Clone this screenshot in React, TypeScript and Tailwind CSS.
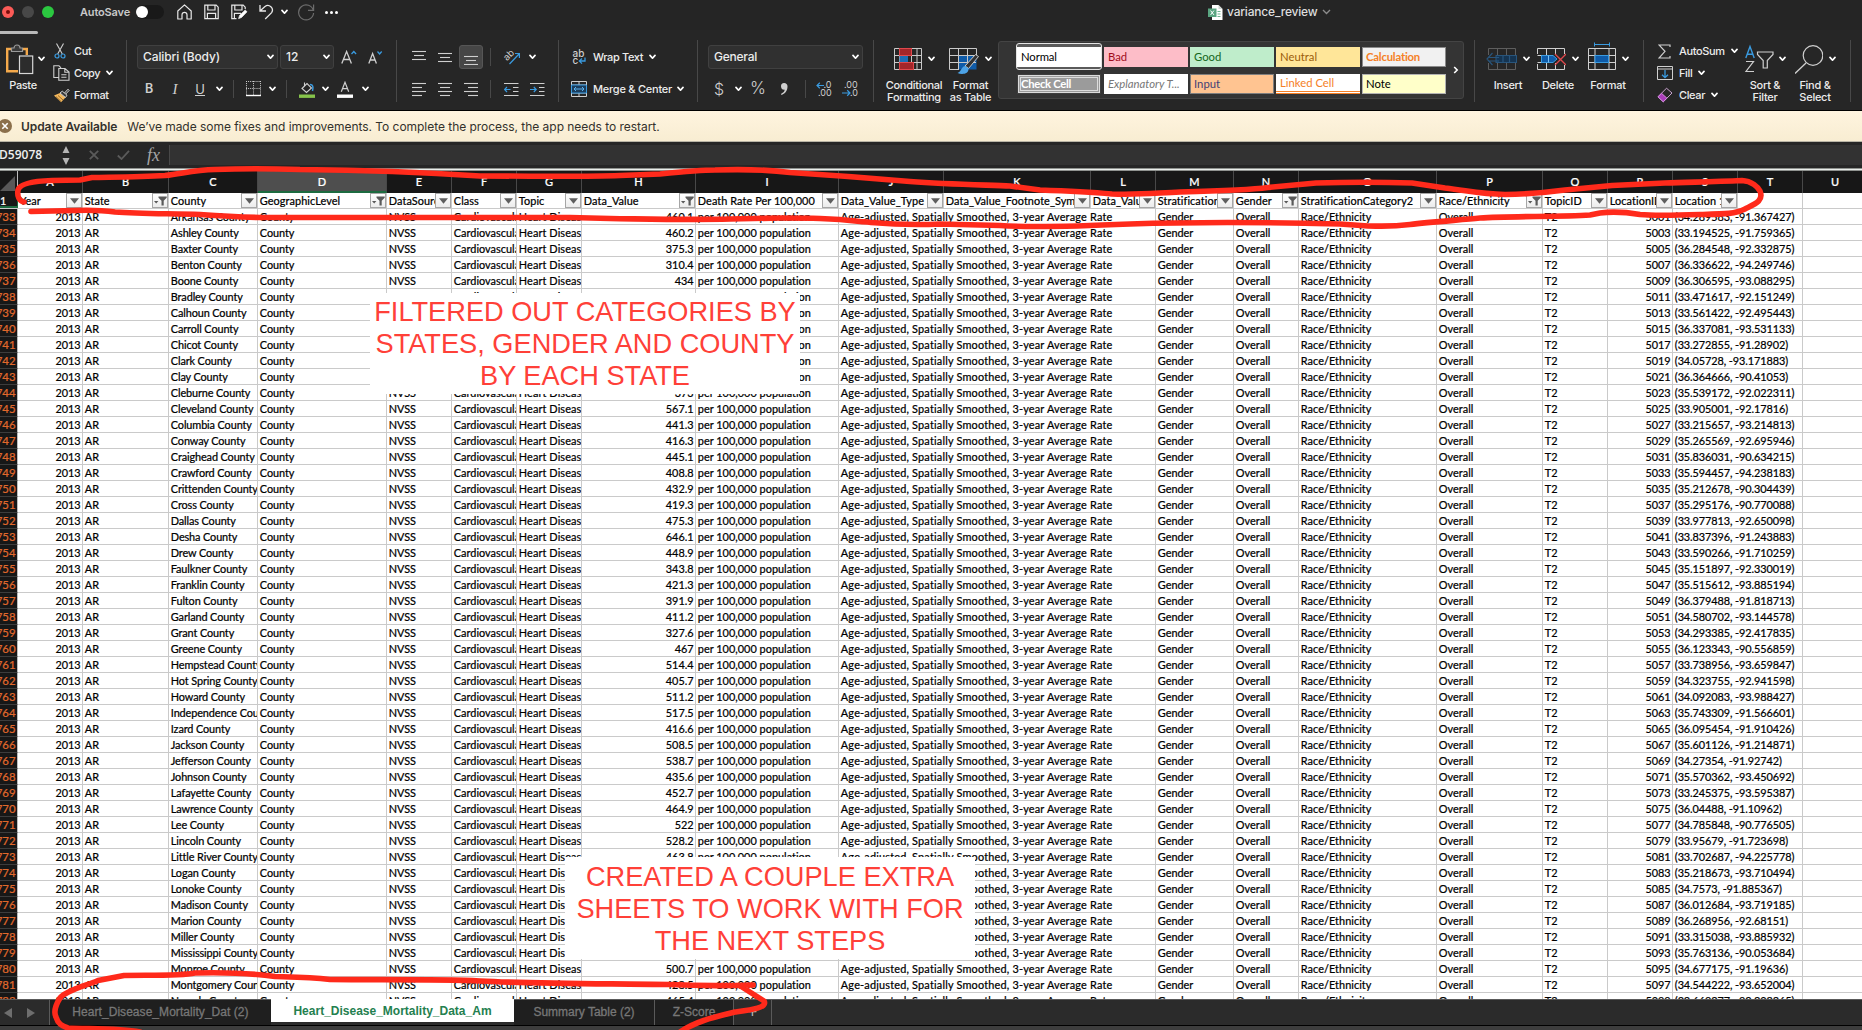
import type { ReactNode } from "react";

const COLS = [
  { id: "A", w: "w-[65px]", head: "Year", filtered: false },
  { id: "B", w: "w-[86px]", head: "State", filtered: true },
  { id: "C", w: "w-[89px]", head: "County", filtered: false },
  { id: "D", w: "w-[129px]", head: "GeographicLevel", filtered: true },
  { id: "E", w: "w-[65px]", head: "DataSource", filtered: false },
  { id: "F", w: "w-[65px]", head: "Class", filtered: false },
  { id: "G", w: "w-[65px]", head: "Topic", filtered: false },
  { id: "H", w: "w-[114px]", head: "Data_Value", filtered: true },
  { id: "I", w: "w-[143px]", head: "Death Rate Per 100,000", filtered: false },
  { id: "J", w: "w-[105px]", head: "Data_Value_Type", filtered: false },
  { id: "K", w: "w-[147px]", head: "Data_Value_Footnote_Symbol", filtered: false },
  { id: "L", w: "w-[65px]", head: "Data_Value_F", filtered: false },
  { id: "M", w: "w-[78px]", head: "StratificationC", filtered: false },
  { id: "N", w: "w-[65px]", head: "Gender", filtered: true },
  { id: "O", w: "w-[138px]", head: "StratificationCategory2", filtered: false },
  { id: "P", w: "w-[106px]", head: "Race/Ethnicity", filtered: true },
  { id: "Q", w: "w-[65px]", head: "TopicID", filtered: false },
  { id: "R", w: "w-[65px]", head: "LocationID", filtered: false },
  { id: "S", w: "w-[65px]", head: "Location 1", filtered: false },
];

const DATA: [string, string, string][] = [
  ["Arkansas", "460.1", "34.289583, -91.367427"],
  ["Ashley", "460.2", "33.194525, -91.759365"],
  ["Baxter", "375.3", "36.284548, -92.332875"],
  ["Benton", "310.4", "36.336622, -94.249746"],
  ["Boone", "434", "36.306595, -93.088295"],
  ["Bradley", "", "33.471617, -92.151249"],
  ["Calhoun", "", "33.561422, -92.495443"],
  ["Carroll", "", "36.337081, -93.531133"],
  ["Chicot", "", "33.272855, -91.28902"],
  ["Clark", "", "34.05728, -93.171883"],
  ["Clay", "", "36.364666, -90.41053"],
  ["Cleburne", "373", "35.539172, -92.022311"],
  ["Cleveland", "567.1", "33.905001, -92.17816"],
  ["Columbia", "441.3", "33.215657, -93.214813"],
  ["Conway", "416.3", "35.265569, -92.695946"],
  ["Craighead", "445.1", "35.836031, -90.634215"],
  ["Crawford", "408.8", "35.594457, -94.238183"],
  ["Crittenden", "432.9", "35.212678, -90.304439"],
  ["Cross", "419.3", "35.295176, -90.770088"],
  ["Dallas", "475.3", "33.977813, -92.650098"],
  ["Desha", "646.1", "33.837396, -91.243883"],
  ["Drew", "448.9", "33.590266, -91.710259"],
  ["Faulkner", "343.8", "35.151897, -92.330019"],
  ["Franklin", "421.3", "35.515612, -93.885194"],
  ["Fulton", "391.9", "36.379488, -91.818713"],
  ["Garland", "411.2", "34.580702, -93.144578"],
  ["Grant", "327.6", "34.293385, -92.417835"],
  ["Greene", "467", "36.123343, -90.556859"],
  ["Hempstead", "514.4", "33.738956, -93.659847"],
  ["Hot Spring", "405.7", "34.323755, -92.941598"],
  ["Howard", "511.2", "34.092083, -93.988427"],
  ["Independence", "517.5", "35.743309, -91.566601"],
  ["Izard", "416.6", "36.095454, -91.910426"],
  ["Jackson", "508.5", "35.601126, -91.214871"],
  ["Jefferson", "538.7", "34.27354, -91.92742"],
  ["Johnson", "435.6", "35.570362, -93.450692"],
  ["Lafayette", "452.7", "33.245375, -93.595387"],
  ["Lawrence", "464.9", "36.04488, -91.10962"],
  ["Lee", "522", "34.785848, -90.776505"],
  ["Lincoln", "528.2", "33.95679, -91.723698"],
  ["Little River", "463.8", "33.702687, -94.225778"],
  ["Logan", "", "35.218673, -93.710494"],
  ["Lonoke", "", "34.7573, -91.885367"],
  ["Madison", "", "36.012684, -93.719185"],
  ["Marion", "", "36.268956, -92.68151"],
  ["Miller", "", "33.315038, -93.885932"],
  ["Mississippi", "", "35.763136, -90.053684"],
  ["Monroe", "500.7", "34.677175, -91.19636"],
  ["Montgomery", "428.5", "34.544222, -93.652004"],
  ["Nevada", "465.4", "33.669277, -93.308265"],
];

const Caret = ({ cls = "text-white" }: { cls?: string }) => (
  <svg width="7" height="6" viewBox="0 0 7 6" className={`shrink-0 ${cls}`}>
    <path d="M1 1.4 3.5 4.2 6 1.4" fill="none" stroke="currentColor" strokeWidth="1.7" strokeLinecap="round" strokeLinejoin="round" />
  </svg>
);

const Slot = ({ w, children, cls = "justify-center" }: { w: string; children?: ReactNode; cls?: string }) => (
  <div className={`flex shrink-0 items-center ${w} ${cls}`}>{children}</div>
);

const Divider = () => <div className="mt-[9px] h-[62px] w-px shrink-0 bg-[#484848]" />;
const Sep = () => <div className="h-[18px] w-px shrink-0 bg-[#484848]" />;

const Big = ({ w, icon, lines }: { w: string; icon: ReactNode; lines: string[] }) => (
  <div className={`flex shrink-0 flex-col items-center pt-2 ${w}`}>
    <div className="flex h-10 items-center gap-[6px]">
      {icon}
      <Caret />
    </div>
    {lines.map((l) => (
      <span key={l} className="whitespace-nowrap text-[11px] font-medium leading-[12px] tracking-[-0.27px] text-[#ececec]">{l}</span>
    ))}
  </div>
);

const ListItem = ({ iconW, icon, label, caret }: { iconW: string; icon: ReactNode; label: string; caret?: boolean }) => (
  <div className="flex h-[22px] items-center">
    <Slot w={iconW}>{icon}</Slot>
    <span className="text-[11px] font-medium tracking-[-0.36px] text-[#ececec]">{label}</span>
    {caret && <span className="ml-[6px] flex"><Caret /></span>}
  </div>
);

const AlignIcon = ({ rows, top }: { rows: [number, number][]; top: number }) => (
  <svg width="15" height="15" viewBox="0 0 15 15">
    {rows.map(([x, x2], i) => (
      <path key={i} d={`M${x} ${top + i * 4}H${x2}`} stroke="#cfcfcf" strokeWidth="1.1" />
    ))}
  </svg>
);

const IndentIcon = ({ out }: { out: boolean }) => (
  <svg width="15" height="15" viewBox="0 0 15 15" fill="none">
    <path d="M0 1.5H14.5M9 5.5H14.5M9 9.5H14.5M0 13.5H14.5" stroke="#cfcfcf" strokeWidth="1.1" />
    <path d={out ? "M6.5 7.5H.8M3 5 .6 7.5 3 10" : "M0 7.5H6M3.8 5 6.2 7.5 3.8 10"} stroke="#3a9be0" strokeWidth="1.2" />
  </svg>
);

function TitleBar() {
  return (
    <div className="relative flex h-[30px] shrink-0 items-start bg-[#252525]">
      <div className="flex h-6 items-center">
        <div className="ml-[2px] flex h-3 w-3 items-center justify-center rounded-full bg-[#fc5b57]">
          <div className="h-1 w-1 rounded-full bg-[#7a0c0a]" />
        </div>
        <div className="ml-2 h-3 w-3 rounded-full bg-[#484848]" />
        <div className="ml-2 h-3 w-3 rounded-full bg-[#2bc840]" />
        <span className="ml-[26px] text-[11px] font-semibold tracking-[-0.16px] text-[#c9c9c9]">AutoSave</span>
        <div className="ml-[6px] flex h-[14px] w-7 items-center rounded-full bg-[#191919]">
          <div className="h-3 w-3 rounded-full bg-white" />
        </div>
        <svg className="ml-[13px]" width="15" height="16" viewBox="0 0 15 16" fill="none" stroke="#e8e8e8" strokeWidth="1.2">
          <path d="M.8 7 7.5.9 14.2 7V15H10V10.8A2.5 2.5 0 0 0 5 10.8V15H.8Z" strokeLinejoin="round" />
        </svg>
        <svg className="ml-[12px]" width="15" height="16" viewBox="0 0 15 16" fill="none" stroke="#e8e8e8" strokeWidth="1.2">
          <path d="M.8 1.2H12.2L14.2 3.2V14.6H.8ZM3.8 1.2V6H11V1.2M3.4 14.6V9.4H11.6V14.6" />
        </svg>
        <svg className="ml-[12px]" width="17" height="16" viewBox="0 0 17 16" fill="none" stroke="#e8e8e8" strokeWidth="1.2">
          <path d="M14.2 5V3.2L12.2 1.2H.8V14.6H5.5M3.8 1.2V6H11V1.2M3.4 14.6V9.4H10" />
          <path d="M7.6 14.6 8.6 11.4 14.2 6 16 7.8 10.6 13.4Z" fill="#fff" strokeWidth=".8" />
        </svg>
        <svg className="ml-[11px]" width="15" height="17" viewBox="0 0 15 17" fill="none" stroke="#e8e8e8" strokeWidth="1.3">
          <path d="M1 1V7H7M1 7 6 2.4A4.6 4.6 0 0 1 12.6 8.6L6.2 15" />
        </svg>
        <span className="ml-[7px] flex"><Caret /></span>
        <svg className="ml-[9px]" width="18" height="18" viewBox="0 0 18 18" fill="none" stroke="#6c6c6c" strokeWidth="1.2">
          <path d="M16.4 7.5A7.5 7.5 0 1 0 16.6 10M16.6 1.5V7.3H11" />
        </svg>
        <div className="ml-[10px] flex gap-[2px]">
          <i className="h-[3px] w-[3px] rounded-full bg-white" />
          <i className="h-[3px] w-[3px] rounded-full bg-white" />
          <i className="h-[3px] w-[3px] rounded-full bg-white" />
        </div>
      </div>
      <div className="absolute left-[1208px] top-0 flex h-6 items-center">
        <svg width="15" height="15" viewBox="0 0 15 15">
          <path d="M4 0H10.5L14.5 4V15H4Z" fill="#fff" />
          <path d="M10.5 0V4H14.5" fill="#cfd6d2" />
          <path d="M9.5 6.5H12.5M9.5 9H12.5M9.5 11.5H12.5" stroke="#6fb591" />
          <rect y="3.5" width="8.5" height="8.5" fill="#5aa581" />
          <path d="M2.6 5.6 5.9 9.9M5.9 5.6 2.6 9.9" stroke="#fff" />
        </svg>
        <span className="ml-1 text-[12px] font-medium tracking-[-0.19px] text-[#dedede]">variance_review</span>
        <svg className="ml-[4px]" width="9" height="6" viewBox="0 0 9 6"><path d="M1 1 4.5 4.4 8 1" fill="none" stroke="#8c8c8c" strokeWidth="1.4" /></svg>
      </div>
    </div>
  );
}

const box = "flex h-6 shrink-0 items-center justify-between rounded-[3px] border border-[#404040] bg-[#303030] pr-[3px] pl-[5px] text-[12px] font-medium text-[#ececec]";

function Ribbon() {
  return (
    <div className="flex h-[80px] shrink-0 bg-[#262626] pt-px">
      <div className="flex w-[126px] shrink-0 flex-col">
        <div className="h-[3px] w-[38px] rounded-r-sm bg-[#b9b9b9]" />
        <div className="flex">
          <div className="w-[48px] pt-[9px] pl-[6px]">
            <div className="flex items-center gap-[4px]">
              <svg width="28" height="32" viewBox="0 0 28 32" fill="none">
                <path d="M5 6H1.2V28.2H12M17 6H20.8V12" stroke="#f4a94b" strokeWidth="2.4" />
                <path d="M5.5 8.5V5H8A3 3 0 0 1 14 5H16.5V8.5Z" fill="#3a3a3a" stroke="#9a9a9a" strokeWidth="1.2" />
                <rect x="13.5" y="13" width="13.2" height="17.5" fill="#2c2c2c" stroke="#d8d8d8" strokeWidth="1.2" />
              </svg>
              <Caret />
            </div>
            <div className="mt-[3px] -ml-[6px] w-[46px] text-center text-[11px] font-medium leading-[14px] tracking-[-0.35px] text-[#ececec]">Paste</div>
          </div>
          <div className="pt-[6px]">
            <ListItem iconW="w-[26px]" label="Cut" icon={
              <svg className="-translate-x-[1px]" width="12" height="16" viewBox="0 0 12 16" fill="none">
                <path d="M2.5.5 8.3 11M9.5.5 3.7 11" stroke="#cfcfcf" strokeWidth="1.1" />
                <circle cx="3" cy="13" r="2" stroke="#3a9be0" strokeWidth="1.2" /><circle cx="9" cy="13" r="2" stroke="#3a9be0" strokeWidth="1.2" />
              </svg>} />
            <ListItem iconW="w-[26px]" label="Copy" caret icon={
              <svg width="17" height="16" viewBox="0 0 17 16" fill="none" stroke="#cfcfcf" strokeWidth="1.1">
                <path d="M5.5 12.5H.8V.8H6L8 2.8M5.8 3.5H12L16 7V15.3H5.8ZM11.8 3.7V7.2H15.8M8.3 9.8H13.5M8.3 12.3H13.5" />
              </svg>} />
            <ListItem iconW="w-[26px]" label="Format" icon={
              <svg width="17" height="15" viewBox="0 0 17 15" fill="none">
                <path d="M1 7.5 7 5 12.5 9.5 8 14.2Z" fill="#f3b75c" />
                <path d="M3 8.6 8 13.5M5 7.5 10 12" stroke="#7b531a" strokeWidth=".8" />
                <path d="M7 5 9.3 3.2 14 7.2 12.5 9.5ZM11.5 5 15 1.2 16.2 2.4 12.8 6" fill="#3a3a3a" stroke="#cfcfcf" strokeWidth="1" />
              </svg>} />
          </div>
        </div>
      </div>
      <Divider />
      <div className="w-[269px] shrink-0 pl-[10px]">
        <div className="flex h-[52px] items-center">
          <div className={`${box} w-[141px] tracking-[-0.1px]`}>Calibri (Body)<Caret /></div>
          <div className={`${box} ml-[2px] w-[54px]`}>12<Caret /></div>
          <svg className="ml-[7px]" width="16" height="14" viewBox="0 0 16 14" fill="none">
            <path d="M.8 13.5 5.6 1.5 10.4 13.5M2.5 9.5H8.7" stroke="#cfcfcf" strokeWidth="1.3" /><path d="M10.5 4 12.8 1.5 15.1 4" stroke="#3a9be0" strokeWidth="1.3" />
          </svg>
          <svg className="ml-[11px]" width="15" height="14" viewBox="0 0 15 14" fill="none">
            <path d="M.8 13.5 4.6 3.5 8.4 13.5M2.2 10H7" stroke="#cfcfcf" strokeWidth="1.3" /><path d="M9.5 1.5 11.6 4 13.7 1.5" stroke="#3a9be0" strokeWidth="1.3" />
          </svg>
        </div>
        <div className="flex h-3 items-center text-[13px] text-[#cfcfcf]">
          <Slot w="w-[24px]"><b className="text-[12.5px] font-semibold">B</b></Slot>
          <Slot w="w-[28px]"><i className="font-['Liberation_Serif'] text-[15px]">I</i></Slot>
          <Slot w="w-[22px]"><span className="border-b border-[#cfcfcf] leading-[12px]">U</span></Slot>
          <Slot w="w-[16px]"><Caret /></Slot>
          <Slot w="w-[12px]"><Sep /></Slot>
          <Slot w="w-[28px]">
            <svg width="15" height="16" viewBox="0 0 15 16" fill="none" stroke="#cfcfcf">
              <path d="M0 .5H15M.5 0V14M14.5 0V14M7.5 0V14M0 7.5H15" strokeDasharray="1 1.1" /><path d="M0 14.5H15" stroke="#fff" strokeWidth="1.4" />
            </svg>
          </Slot>
          <Slot w="w-[10px]"><Caret /></Slot>
          <Slot w="w-[18px]"><Sep /></Slot>
          <Slot w="w-[24px]">
            <svg width="16" height="17" viewBox="0 0 16 17" fill="none">
              <path d="M3 7.5 8 2.5 12.5 7 7.5 11.5ZM5.5 5V1.5" stroke="#cfcfcf" strokeWidth="1.1" /><path d="M11 3.5C14 3.5 14.5 6 13.5 10" stroke="#3a9be0" strokeWidth="1.5" /><rect y="13.5" width="16" height="3.4" fill="#86c34b" />
            </svg>
          </Slot>
          <Slot w="w-[12px]"><Caret /></Slot>
          <Slot w="w-[28px]">
            <svg width="16" height="17" viewBox="0 0 16 17" fill="none">
              <path d="M4.3 10.8 8 1.3 11.7 10.8M5.6 7.6H10.4" stroke="#cfcfcf" strokeWidth="1.2" /><rect y="13.5" width="16" height="3.4" fill="#fff" />
            </svg>
          </Slot>
          <Slot w="w-[12px]"><Caret /></Slot>
        </div>
      </div>
      <Divider />
      <div className="w-[161px] shrink-0 pl-[9px]">
        <div className="flex h-[52px] items-center">
          <Slot w="w-[26px]"><AlignIcon top={1.5} rows={[[0, 14], [2, 12], [0, 14]]} /></Slot>
          <Slot w="w-[26px]"><AlignIcon top={3.5} rows={[[0, 14], [2, 12], [0, 14]]} /></Slot>
          <Slot w="w-[26px]"><div className="flex h-6 w-6 items-center justify-center rounded-[3px] border border-[#565656] bg-[#464646]"><AlignIcon top={6.5} rows={[[0, 14], [2, 12], [0, 14]]} /></div></Slot>
          <Slot w="w-[13px]"><Sep /></Slot>
          <Slot w="w-[29px]">
            <svg className="overflow-visible" width="16" height="16" viewBox="0 0 16 16" fill="none">
              <text x="-1" y="9" transform="rotate(-45 5 6)" fill="#cfcfcf" fontSize="9.5" fontFamily="Inter">ab</text>
              <path d="M5.5 15 15 5M11 4.5H15.4V9" stroke="#3a9be0" strokeWidth="1.2" />
            </svg>
          </Slot>
          <Slot w="w-[12px]"><Caret /></Slot>
        </div>
        <div className="flex h-3 items-center">
          <Slot w="w-[26px]"><AlignIcon top={1.5} rows={[[0, 14], [0, 10], [0, 14], [0, 10]]} /></Slot>
          <Slot w="w-[26px]"><AlignIcon top={1.5} rows={[[0, 14], [2, 12], [0, 14], [2, 12]]} /></Slot>
          <Slot w="w-[26px]"><AlignIcon top={1.5} rows={[[0, 14], [4, 14], [0, 14], [4, 14]]} /></Slot>
          <Slot w="w-[13px]"><Sep /></Slot>
          <Slot w="w-[28px]"><IndentIcon out /></Slot>
          <Slot w="w-[24px]"><IndentIcon out={false} /></Slot>
        </div>
      </div>
      <Divider />
      <div className="w-[138px] shrink-0 pl-[12px] text-[11px] font-medium text-[#ececec]">
        <div className="flex h-[52px] items-center">
          <svg className="overflow-visible" width="16" height="16" viewBox="0 0 16 16" fill="none">
            <text x="1.5" y="7.5" fill="#cfcfcf" fontSize="10" fontFamily="Inter">ab</text>
            <text x="1.5" y="15.2" fill="#cfcfcf" fontSize="10" fontFamily="Inter">c</text>
            <path d="M14 8.5V12H8.5M11 9.5 8.3 12 11 14.6" stroke="#3a9be0" strokeWidth="1.3" />
          </svg>
          <span className="ml-[6px] whitespace-nowrap tracking-[-0.38px]">Wrap Text</span>
          <span className="ml-[6px] flex"><Caret /></span>
        </div>
        <div className="flex h-3 items-center">
          <svg width="16" height="16" viewBox="0 0 16 16" fill="none">
            <path d="M.5 .5H15.5V15.5H.5ZM.5 4H15.5M.5 12H15.5M8 .5V4M8 12V15.5" stroke="#cfcfcf" />
            <rect x="1" y="4" width="14" height="8" fill="#1b3d5c" /><path d="M.5 4H15.5V12H.5Z" stroke="#3a9be0" />
            <path d="M3 8H13M5 6 3 8 5 10M11 6 13 8 11 10" stroke="#5cb2ee" />
          </svg>
          <span className="ml-[6px] whitespace-nowrap tracking-[-0.24px]">Merge &amp; Center</span>
          <span className="ml-[5px] flex"><Caret /></span>
        </div>
      </div>
      <Divider />
      <div className="w-[175px] shrink-0 pl-[10px]">
        <div className="flex h-[52px] items-center">
          <div className={`${box} w-[155px] tracking-[-0.24px]`}>General<Caret /></div>
        </div>
        <div className="flex h-3 items-center text-[#cfcfcf]">
          <Slot w="w-[22px]"><span className="text-[16px] font-light">$</span></Slot>
          <Slot w="w-[16px]"><Caret /></Slot>
          <Slot w="w-[24px]"><span className="text-[17px] font-light">%</span></Slot>
          <Slot w="w-[28px]">
            <svg width="8" height="12" viewBox="0 0 8 12"><path d="M4 0A3.4 3.4 0 0 1 7.5 3.6C7.5 8 5 11 1.2 12V10.7C3.5 9.8 4.6 8.4 4.7 6.6A3.3 3.3 0 1 1 4 0Z" fill="#cfcfcf" /></svg>
          </Slot>
          <Slot w="w-[14px]"><Sep /></Slot>
          <Slot w="w-[24px]">
            <svg className="overflow-visible" width="16" height="16" viewBox="0 0 16 16" fill="none">
              <text x="7.5" y="7.3" fill="#cfcfcf" fontSize="9" fontFamily="Inter">.0</text><text x="2" y="15.3" fill="#cfcfcf" fontSize="9" fontFamily="Inter">.00</text>
              <path d="M8 4.5H1M3.8 1.8 1 4.5 3.8 7.2" stroke="#3a9be0" strokeWidth="1.2" />
            </svg>
          </Slot>
          <Slot w="w-[28px]">
            <svg className="overflow-visible" width="16" height="16" viewBox="0 0 16 16" fill="none">
              <text x="2" y="7.3" fill="#cfcfcf" fontSize="9" fontFamily="Inter">.00</text><text x="8" y="15.3" fill="#cfcfcf" fontSize="9" fontFamily="Inter">.0</text>
              <path d="M0 12H8M5.2 9.3 8 12 5.2 14.7" stroke="#3a9be0" strokeWidth="1.2" />
            </svg>
          </Slot>
        </div>
      </div>
      <Divider />
      <div className="flex w-[600px] shrink-0 pl-[11px]">
        <Big w="w-[58px]" lines={["Conditional", "Formatting"]} icon={
          <svg width="28" height="22" viewBox="0 0 28 22">
            <path d="M.5 .5H27.5V21.5H.5ZM.5 7.5H27.5M.5 14.5H27.5M5.5 .5V21.5M17.5 .5V21.5M23 .5V21.5" fill="none" stroke="#c9c9c9" />
            <rect x="5.5" y=".5" width="12" height="7" fill="#a3262a" stroke="#e0484c" /><rect x="5.5" y="8" width="8.5" height="6.5" fill="#1c6db5" /><rect x="5.5" y="14.5" width="14" height="7" fill="#a3262a" stroke="#e0484c" />
          </svg>} />
        <Big w="w-[55px]" lines={["Format", "as Table"]} icon={
          <svg className="overflow-visible" width="30" height="22" viewBox="0 0 30 22">
            <rect x="9.5" y="7.5" width="18" height="14" fill="#0f5ba8" />
            <path d="M27.5 7V.5H.5V21.5H10M.5 7.5H27.5M.5 14.5H27M9.5 .5V21.5M18.5 .5V21.5" fill="none" stroke="#c9c9c9" />
            <path d="M16 18 26.5 6.5 29.5 8.5 19.5 20.5Z" fill="#333" stroke="#c9c9c9" /><path d="M16.5 18C12 18.5 13 23 8.5 25 13 27 20 26 19.5 20.5Z" fill="#4da3e6" />
          </svg>} />
        <div className="mt-[10px] flex h-[58px] w-[466px] items-center rounded-[3px] border border-[#444] bg-[#343434] pl-[17px] font-['Lato'] text-[11.3px] leading-none">
          <div className="flex flex-col gap-[1px]">
            <div className="flex h-[26px] items-center gap-[2px]">
              <div className="flex h-[27px] w-[86px] items-end rounded-[3px] border border-[#e4e4e4] bg-[#5a5a5a] pb-[2px]"><div className="flex h-[20px] w-full items-center bg-white pl-1 tracking-[-0.1px] text-black">Normal</div></div>
              <div className="flex h-5 w-[84px] items-center bg-[#fdbdc8] pl-1 text-[#a00d1c]">Bad</div>
              <div className="flex h-5 w-[84px] items-center bg-[#bfedcb] pl-1 text-[#14661c]">Good</div>
              <div className="flex h-5 w-[84px] items-center bg-[#ffe699] pl-1 text-[#9c5d0a]">Neutral</div>
              <div className="flex h-5 w-[84px] items-center border border-[#8a8a8a] bg-[#f1f1f1] pl-[3px] font-bold tracking-[-0.2px] text-[#f58026]">Calculation</div>
            </div>
            <div className="flex h-[26px] items-center gap-[2px]">
              <div className="flex w-[86px] justify-center"><div className="flex h-[18px] w-[82px] items-center border-[3px] border-double border-[#dcdcdc] bg-[#9b9b9b] font-bold tracking-[-0.3px] text-white outline outline-[#3f3f3f]">Check Cell</div></div>
              <div className="flex h-5 w-[84px] items-center bg-white pl-1 italic text-[#777]">Explanatory T...</div>
              <div className="flex h-5 w-[84px] items-center border border-[#7f7f7f] bg-[#ffc491] pl-[3px] text-[#3f3f76]">Input</div>
              <div className="flex h-5 w-[84px] items-center border-b-[3px] border-double border-[#f58026] bg-white pt-[2px] pl-1 text-[#f58026]">Linked Cell</div>
              <div className="flex h-5 w-[84px] items-center border border-[#b2b2b2] bg-[#ffffc9] pl-[3px] text-black">Note</div>
            </div>
          </div>
          <svg className="ml-[7px]" width="6" height="8" viewBox="0 0 6 8"><path d="M1.2 1 4.2 4 1.2 7" fill="none" stroke="#fff" strokeWidth="1.6" /></svg>
        </div>
      </div>
      <Divider />
      <div className="flex w-[168px] shrink-0 pl-[8px]">
        <Big w="w-[50px]" lines={["Insert"]} icon={
          <svg width="31" height="22" viewBox="0 0 31 22" fill="none">
            <path d="M2.5 7V.5H29.5V21.5H2.5V15M11.5 .5V7M20.5 .5V7M11.5 15V21.5M20.5 15V21.5" stroke="#5e5e5e" /><rect x="10" y="7.5" width="20.5" height="7" fill="#153451" stroke="#28557c" />
            <path d="M13 9.5H2M6.5 5 1 11 6.5 17M13 13H2M17 7V15M23.5 7V15" stroke="#28557c" strokeWidth="1.2" />
          </svg>} />
        <Big w="w-[50px]" lines={["Delete"]} icon={
          <svg width="29" height="22" viewBox="0 0 29 22" fill="none">
            <path d="M.5 6V.5H27.5V6M.5 16V21.5H27.5V17M9.5 .5V7M18.5 .5V7M9.5 15V21.5M18.5 15V21.5M.5 7.5H16M.5 14.5H16" stroke="#cfcfcf" /><path d="M4.5 7.5H16L20 11 16 14.5H4.5Z" fill="#0f5ba8" stroke="#3a9be0" /><path d="M11.5 7.5V14.5" stroke="#7cc0f2" />
            <path d="M18 6 29 17M29 6 18 17" stroke="#e0484c" strokeWidth="1.3" />
          </svg>} />
        <Big w="w-[50px]" lines={["Format"]} icon={
          <svg className="overflow-visible" width="28" height="22" viewBox="0 0 28 22" fill="none">
            <path d="M.5 .5H27.5V21.5H.5ZM.5 7.5H27.5M.5 14.5H27.5M7 .5V21.5M21 .5V21.5" stroke="#cfcfcf" /><rect x="7" y="7.5" width="13.5" height="7" fill="#0f5ba8" stroke="#3a9be0" />
            <path d="M6.5 -3.5H21.5M6.5 -5.5V-1.5M21.5 -5.5V-1.5" stroke="#3a9be0" />
          </svg>} />
      </div>
      <Divider />
      <div className="flex w-[206px] shrink-0">
        <div className="w-[96px] pt-[9px]">
          <ListItem iconW="w-[35px]" label="AutoSum" caret icon={
            <svg className="translate-x-[3px]" width="13" height="15" viewBox="0 0 13 15"><path d="M12 3V1H1L7 7.3 1 14H12V12" fill="none" stroke="#cfcfcf" strokeWidth="1.2" /></svg>} />
          <ListItem iconW="w-[35px]" label="Fill" caret icon={
            <svg className="translate-x-[3px]" width="16" height="14" viewBox="0 0 16 14" fill="none"><path d="M.5 .5H15.5V13.5H.5ZM.5 3H15.5" stroke="#cfcfcf" /><path d="M8 4V11.5M5 8.7 8 11.6 11 8.7" stroke="#3a9be0" strokeWidth="1.3" /></svg>} />
          <ListItem iconW="w-[35px]" label="Clear" caret icon={
            <svg className="translate-x-[3px]" width="16" height="16" viewBox="0 0 16 16" fill="none"><path d="M1 9.8 9.5 1.2 15 6 6.3 14.8Z" stroke="#c9a3cf" /><path d="M1 9.8 4.5 6.3 9.9 11.2 6.3 14.8Z" fill="#a93cba" stroke="#d58be0" /></svg>} />
        </div>
        <Big w="w-[50px]" lines={["Sort &", "Filter"]} icon={
          <svg className="overflow-visible" width="28" height="28" viewBox="0 0 28 28" fill="none">
            <path d="M.8 13 5 1.5 9.2 13M2.2 9.3H7.8" stroke="#3a9be0" strokeWidth="1.4" /><path d="M1 16.5H8.5L1 26.5H9" stroke="#cfcfcf" strokeWidth="1.2" />
            <path d="M12.5 7H28V9.5L22.3 15.5V23H18.2V15.5L12.5 9.5Z" stroke="#cfcfcf" strokeWidth="1.2" />
          </svg>} />
        <Big w="w-[50px]" lines={["Find &", "Select"]} icon={
          <svg width="28" height="29" viewBox="0 0 28 29" fill="none"><circle cx="18" cy="10.5" r="9.8" stroke="#cfcfcf" strokeWidth="1.2" /><path d="M11 18 0 28.5" stroke="#cfcfcf" strokeWidth="1.3" /></svg>} />
      </div>
      <Divider />
    </div>
  );
}

const FilterButton = ({ filtered }: { filtered: boolean }) => (
  <div className="absolute right-0 top-0 flex h-[15px] w-[16px] items-center justify-center border border-[#a6a6a6] bg-linear-to-b from-white to-[#ececec]">
    {filtered ? (
      <svg className="shrink-0" width="13" height="10" viewBox="0 0 13 10" fill="#5a5a5a"><path d="M0 5H4.4L2.2 7.5ZM4.5 .5H12.7V1.7L9.7 4.7V9.5H7.5V4.7L4.5 1.7Z" /></svg>
    ) : (
      <svg width="9" height="6" viewBox="0 0 9 6"><path d="M0 .3H9L4.5 5.8Z" fill="#5e5e5e" /></svg>
    )}
  </div>
);

const line = "h-full shrink-0 overflow-hidden whitespace-nowrap border-r border-[#cacaca] pl-[1.8px]";

function Sheet() {
  return (
    <div className="h-[828px] shrink-0 overflow-hidden bg-white font-['Lato'] text-[10.9px] leading-[16px] text-black [-webkit-text-stroke:0.22px]">
      <div className="flex h-[22px] bg-[#171717] text-[11px] font-medium leading-[22px] text-white">
        <div className="flex w-[18px] shrink-0 items-end justify-end border-r border-[#bdbdbd] pr-[2px] pb-[2px]">
          <svg width="15" height="15" viewBox="0 0 15 15"><path d="M15 0V15H0Z" fill="#585858" /></svg>
        </div>
        {[...COLS, { id: "T", w: "w-[65px]" }, { id: "U", w: "w-[65px]" }].map((c) => (
          <div key={c.id} className={`shrink-0 border-r border-[#484848] text-center ${c.w} ${c.id === "D" ? "border-b-2 border-b-[#1d6b40] bg-[#4e4e4e]" : ""}`}>{c.id}</div>
        ))}
      </div>
      <div className="flex h-4 border-b border-[#cacaca]">
        <div className="w-[18px] shrink-0 border-r border-b-2 border-r-[#1d6b40] border-b-[#1d6b40] bg-[#171717] leading-[15px] text-white">1</div>
        {COLS.map((c) => (
          <div key={c.id} className={`relative ${line} ${c.w}`}>
            <span className="tracking-[0.07px]">{c.head}</span>
            <FilterButton filtered={c.filtered} />
          </div>
        ))}
        <div className={`w-[65px] ${line}`} />
      </div>
      {DATA.map(([county, value, loc], i) => (
        <div key={county} className="flex h-4 shrink-0 border-b border-[#cacaca]">
          <div className="flex h-4 w-[18px] shrink-0 justify-end overflow-hidden border-r border-b border-r-[#bdbdbd] border-b-[#3c3c3c] bg-[#171717] pr-[1.5px] text-[11.4px] text-[#e0692c]">{733 + i}</div>
          <div className={`w-[65px] pr-[1.5px] text-right tracking-[-0.05px] ${line}`}>2013</div>
          <div className={`w-[86px] ${line}`}>AR</div>
          <div className={`w-[89px] tracking-[-0.12px] ${line}`}>{county} County</div>
          <div className={`w-[129px] tracking-[-0.06px] ${line}`}>County</div>
          <div className={`w-[65px] tracking-[-0.05px] ${line}`}>NVSS</div>
          <div className={`w-[65px] tracking-[0.02px] ${line}`}>Cardiovascular Diseases</div>
          <div className={`w-[65px] tracking-[0.1px] ${line}`}>Heart Diseas</div>
          <div className={`w-[114px] pr-[1.5px] text-right tracking-[-0.03px] ${line}`}>{value}</div>
          <div className={`w-[143px] tracking-[0.02px] ${line}`}>per 100,000 population</div>
          <div className={`w-[317px] tracking-[0.19px] ${line}`}>Age-adjusted, Spatially Smoothed, 3-year Average Rate</div>
          <div className={`w-[78px] ${line}`}>Gender</div>
          <div className={`w-[65px] tracking-[0.05px] ${line}`}>Overall</div>
          <div className={`w-[138px] tracking-[0.05px] ${line}`}>Race/Ethnicity</div>
          <div className={`w-[106px] tracking-[0.05px] ${line}`}>Overall</div>
          <div className={`w-[65px] ${line}`}>T2</div>
          <div className={`w-[65px] pr-[1.5px] text-right tracking-[-0.05px] ${line}`}>{5001 + i * 2}</div>
          <div className={`w-[130px] tracking-[-0.08px] ${line}`}>({loc})</div>
        </div>
      ))}
    </div>
  );
}

function SheetTabs() {
  const idle = "flex h-full shrink-0 items-center justify-center border-r border-[#5a5a5a] bg-[#1f1f1f] pb-[2px] text-[#777] [-webkit-text-stroke:0.3px]";
  return (
    <div className="flex h-[26px] shrink-0 border-t border-[#5a5a5a] bg-[#2b2b2b] font-['Liberation_Sans'] text-[12px]">
      <div className="flex w-[49px] shrink-0 items-center">
        <svg className="ml-[4px]" width="8" height="10" viewBox="0 0 8 10"><path d="M8 0V10L0 5Z" fill="#6e6e6e" /></svg>
        <svg className="ml-[15px]" width="8" height="10" viewBox="0 0 8 10"><path d="M0 0V10L8 5Z" fill="#6e6e6e" /></svg>
      </div>
      <div className="flex w-[222px] shrink-0 border-l border-[#5a5a5a]">
        <div className="flex flex-1 items-center justify-center bg-[#1f1f1f] pb-[2px] tracking-[0.05px] text-[#777] [-webkit-text-stroke:0.3px]">Heart_Disease_Mortality_Dat (2)</div>
      </div>
      <div className="-mt-px flex h-[23px] w-[243px] shrink-0 items-center justify-center bg-white pt-[1px] font-bold text-[#24804f]">Heart_Disease_Mortality_Data_Am</div>
      <div className={`w-[141px] ${idle}`}>Summary Table (2)</div>
      <div className={`w-[79px] ${idle}`}>Z-Score</div>
      <div className="flex w-[38px] shrink-0 items-center justify-center border-r border-[#5a5a5a] pb-[2px] text-[16px] text-[#bdbdbd]">+</div>
    </div>
  );
}

const note = "absolute flex flex-col items-center whitespace-nowrap bg-white font-['Liberation_Sans'] text-[27.2px] leading-[32px] text-[#ff4038]";

export default function App() {
  return (
    <div className="relative flex h-[1030px] w-[1862px] flex-col overflow-hidden bg-[#262626] font-['Inter']">
      <TitleBar />
      <Ribbon />
      <div className="flex h-[32px] shrink-0 items-center border-t border-b border-t-black border-b-[#b9b5a6] bg-linear-to-b from-[#fff4df] to-[#f8edd2] pt-[2px] text-[12px] text-[#33312c]">
        <svg className="-mt-[2px] -ml-[2px]" width="14" height="14" viewBox="0 0 14 14"><circle cx="7" cy="7" r="7" fill="#8b6f4b" /><path d="M4.3 4.3 9.7 9.7M9.7 4.3 4.3 9.7" stroke="#fff" strokeWidth="1.6" /></svg>
        <span className="ml-[9px] font-semibold tracking-[-0.08px]">Update Available</span>
        <span className="ml-[10px] tracking-[-0.037px]">We’ve made some fixes and improvements. To complete the process, the app needs to restart.</span>
      </div>
      <div className="flex h-[26px] shrink-0 items-center bg-[#262626]">
        <span className="-ml-[1px] w-[63px] font-['Open_Sans'] text-[12px] font-semibold text-[#efefef]">D59078</span>
        <svg width="8" height="19" viewBox="0 0 8 19" fill="#b5b5b5"><path d="M4 0 7.5 7H.5ZM4 19 7.5 12H.5Z" /></svg>
        <svg className="ml-[19px]" width="10" height="10" viewBox="0 0 10 10"><path d="M.8 .8 9.2 9.2M9.2 .8 .8 9.2" stroke="#5a5a5a" strokeWidth="1.8" /></svg>
        <svg className="ml-[18px]" width="13" height="10" viewBox="0 0 13 10"><path d="M.8 5.5 4.5 9 12 .8" fill="none" stroke="#5a5a5a" strokeWidth="1.8" /></svg>
        <i className="ml-[17px] w-[22px] font-['Liberation_Serif'] text-[18px] leading-none text-[#a5a5a5]">fx</i>
        <div className="h-[20px] flex-1 border-l border-[#484848] bg-[#323232]" />
      </div>
      <div className="h-[3px] shrink-0 border-t border-b border-[#8f928f] bg-[#e9edea]" />
      <Sheet />
      <SheetTabs />
      <div className="flex-1 border-t border-black bg-[#3d3d3d]" />

      <div className={`${note} left-[370px] top-[293px] h-[101px] w-[430px] pt-[3px]`}>
        <span>FILTERED OUT CATEGORIES BY</span>
        <span>STATES, GENDER AND COUNTY</span>
        <span>BY EACH STATE</span>
      </div>
      <div className={`${note} left-[565px] top-[857px] h-[102px] w-[410px] pt-[4px]`}>
        <span>CREATED A COUPLE EXTRA</span>
        <span>SHEETS TO WORK WITH FOR</span>
        <span>THE NEXT STEPS</span>
      </div>

      <svg className="absolute left-0 top-0" width="1862" height="1030" viewBox="0 0 1862 1030" fill="none" stroke="#ff2a1b" strokeWidth="5.6" strokeLinecap="round" strokeLinejoin="round">
        <path d="M24 202C19 201 17 196 18 190C20 183 35 181 52 180.5L80 180L92 177.5C120 177 140 177 165 175.5C185 173 195 170 215 169.5C240 168.5 270 168.5 300 169.5C360 170 420 172 480 176C540 176 580 177 620 175.5L660 174C690 171 700 170 715 170C745 169 770 170 790 172.5C830 175 870 178 910 181.5C950 184.5 990 185 1010 186L1040 190C1070 191 1090 192 1112 194C1140 195 1155 193 1180 192C1220 191 1250 190 1268 187.5L1316 183C1350 182 1380 182 1412 183L1445 188C1470 191 1480 194 1505 194.5C1535 194 1550 192 1565 190L1612 185.5L1665 183C1690 182 1710 182 1742 180.5C1752 181 1758 187 1760 191C1764 201 1755 204 1745 209C1735 214 1725 214 1700 214.5C1670 215.5 1650 215.5 1640 214.5C1625 212 1615 211 1600 213L1590 215C1560 217 1510 216 1480 218C1460 220 1430 222 1410 224.5C1390 227 1380 226 1368 226L1340 224C1260 222 1190 222 1130 224C1060 227 1020 227 1000 225.5L940 224C900 226 880 223 860 221.5C830 218 810 218 780 218L730 219C690 220 650 219 610 218.5L570 217.5H260C235 217 220 216 200 214.5C170 213.5 140 214 115 212C100 210 90 210 75 210.5L31 211.5" />
        <path d="M753 985C720 986 700 986 670 984.5C600 983.5 540 984 480 981C440 979 380 980 330 979.5C310 977 295 977 275 976.5C250 973 215 972.5 195 973C180 976 150 975 124 975.5L98 980.5C85 986 65 991 60 998C55 1006 54 1013 56 1017C58 1024 62 1026 68 1028C90 1029 120 1028 140 1032M742 987L764 1001C768 1008 750 1010 735 1012C710 1018 695 1022 680 1032" />
      </svg>
    </div>
  );
}
